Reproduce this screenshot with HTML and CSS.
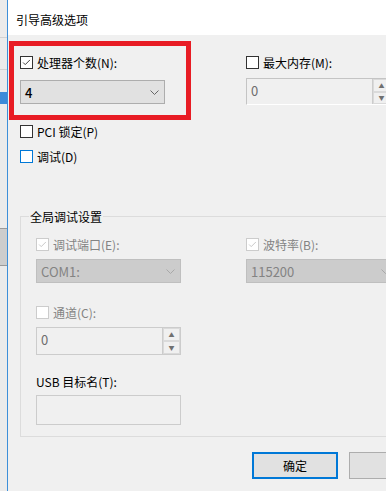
FILE: index.html
```html
<!DOCTYPE html>
<html lang="zh-CN">
<head>
    <meta charset="utf-8">
    <title>引导高级选项</title>
    <link rel="stylesheet" href="styles.css">
</head>
<body>

<div class="screen">
    <div class="side">
        <div class="side-line top-line"></div>
        <div class="side-line"></div>
        <div class="side-tab"></div>
        <div class="side-block"></div>
    </div>

    <div class="dialog">
        <div class="titlebar">引导高级选项</div>

        <div class="content">
            <div class="pair">
                <div class="field">
                    <label class="check">
                        <span class="box">
                            <svg viewBox="0 0 13 13"><path d="M2.5 6.5 L5 9 L10.5 3.5"/></svg>
                        </span>处理器个数(N):
                    </label>
                    <div class="select cpu">
                        <span>4</span>
                        <svg class="chev" viewBox="0 0 9 5"><path d="M0.5 0.5 L4.5 4.5 L8.5 0.5"/></svg>
                    </div>
                </div>
                <div class="field">
                    <label class="check"><span class="box"></span>最大内存(M):</label>
                    <div class="spin mem">
                        <span class="spin-val">0</span>
                        <span class="spin-btns">
                            <span class="spin-btn">▲</span>
                            <span class="spin-btn">▼</span>
                        </span>
                    </div>
                </div>
            </div>

            <label class="check pci"><span class="box"></span>PCI 锁定(P)</label>
            <label class="check debug"><span class="box focus"></span>调试(D)</label>

            <div class="group">
                <div class="group-title">全局调试设置</div>

                <div class="pair inner">
                    <div class="field">
                        <label class="check off">
                            <span class="box">
                                <svg viewBox="0 0 13 13"><path d="M2.5 6.5 L5 9 L10.5 3.5"/></svg>
                            </span>调试端口(E):
                        </label>
                        <div class="select disabled">
                            <span>COM1:</span>
                            <svg class="chev" viewBox="0 0 9 5"><path d="M0.5 0.5 L4.5 4.5 L8.5 0.5"/></svg>
                        </div>
                    </div>
                    <div class="field">
                        <label class="check off">
                            <span class="box">
                                <svg viewBox="0 0 13 13"><path d="M2.5 6.5 L5 9 L10.5 3.5"/></svg>
                            </span>波特率(B):
                        </label>
                        <div class="select disabled baud">
                            <span>115200</span>
                            <svg class="chev" viewBox="0 0 9 5"><path d="M0.5 0.5 L4.5 4.5 L8.5 0.5"/></svg>
                        </div>
                    </div>
                </div>

                <div class="field channel">
                    <label class="check off"><span class="box"></span>通道(C):</label>
                    <div class="spin chan">
                        <span class="spin-val">0</span>
                        <span class="spin-btns">
                            <span class="spin-btn">▲</span>
                            <span class="spin-btn">▼</span>
                        </span>
                    </div>
                </div>

                <div class="field usb">
                    <div class="plain-label">USB 目标名(T):</div>
                    <div class="textbox"></div>
                </div>
            </div>

            <div class="buttons">
                <button class="btn primary">确定</button>
                <button class="btn"></button>
            </div>
        </div>

        <div class="highlight"></div>
    </div>
</div>

</body>
</html>
```

FILE: styles.css
```css
:root {
    --face: #f0f0f0;
    --ctrl: #e1e1e1;
    --ctrl-border: #adadad;
    --muted: #838383;
    --accent: #0078d7;
    --mark: #e81c24;
}

html, body {
    margin: 0;
    padding: 0;
    background: var(--face);
}

body {
    font-family: "Noto Sans CJK SC", "Noto Sans", sans-serif;
    font-size: 12px;
    color: #000;
}

.screen {
    width: 386px;
    height: 491px;
    display: flex;
    overflow: hidden;
}

/* window behind the dialog */
.side {
    width: 7px;
    flex: none;
    background: #ebebeb;
    border-right: 1px solid #3d8fd9;
    display: flex;
    flex-direction: column;
}

.side-line {
    height: 1px;
    background: #d2d2d2;
    margin-top: 31px;
}

.side-line.top-line {
    margin-top: 37px;
}

.side-tab {
    height: 12px;
    margin-top: 22px;
    background: #3c8ad8;
}

.side-block {
    height: 36px;
    margin-top: 124px;
    background: #cdcdcd;
    border-top: 1px solid #9a9a9a;
    border-bottom: 1px solid #9a9a9a;
}

.dialog {
    flex: 1;
    position: relative;
    overflow: hidden;
    background: var(--face);
}

.titlebar {
    height: 35px;
    box-sizing: border-box;
    padding: 12px 0 0 8px;
    line-height: 16px;
    background: #fff;
}

.content {
    padding: 21px 0 0 12px;
}

.pair {
    display: grid;
    grid-template-columns: 226px 144px;
}

.field {
    display: flex;
    flex-direction: column;
}

.check {
    display: flex;
    align-items: center;
    gap: 4px;
    height: 13px;
    line-height: 13px;
    white-space: nowrap;
}

.box {
    width: 13px;
    height: 13px;
    box-sizing: border-box;
    border: 1px solid #333;
    background: #fff;
    flex: none;
    display: block;
}

.box svg {
    display: block;
    width: 11px;
    height: 11px;
    margin: 0;
}

.box svg path {
    fill: none;
    stroke: #333;
    stroke-width: 1.1;
}

.box.focus {
    border-color: var(--accent);
}

.check.off {
    color: var(--muted);
}

.check.off .box {
    border-color: #cccccc;
}

.check.off .box svg path {
    stroke: #c4c4c4;
}

.select {
    margin-top: 11px;
    width: 145px;
    height: 24px;
    box-sizing: border-box;
    border: 1px solid var(--ctrl-border);
    background: var(--ctrl);
    display: flex;
    align-items: center;
    justify-content: space-between;
    padding: 0 5px 0 4px;
    font-size: 13px;
}

.select.cpu {
    font-weight: 500;
}

.chev {
    width: 9px;
    height: 5px;
}

.chev path {
    fill: none;
    stroke: #666;
    stroke-width: 1;
}

.select.disabled {
    margin-top: 8px;
    background: #cccccc;
    border-color: #bfbfbf;
    color: #838383;
}

.select.disabled .chev path {
    stroke: #a8a8a8;
}

.select.baud {
    width: 150px;
}

.spin {
    box-sizing: border-box;
    border: 1px solid #cccccc;
    background: var(--face);
    display: flex;
    justify-content: space-between;
    color: #6d6d6d;
    font-size: 13px;
}

.spin-val {
    padding: 4px 0 0 4px;
    line-height: 16px;
}

.spin.mem {
    margin-top: 9px;
    width: 145px;
    height: 27px;
    border-color: #c4c4c4 #c4c4c4 #fff;
}

.spin.chan {
    margin-top: 8px;
    width: 145px;
    height: 28px;
}

.spin-btns {
    width: 17px;
    display: flex;
    flex-direction: column;
    border-left: 1px solid #cccccc;
}

.spin-btn {
    flex: 1;
    display: flex;
    align-items: center;
    justify-content: center;
    font-size: 6px;
    color: #707070;
    border: 1px solid #dadada;
    background: var(--face);
}

.check.pci {
    margin-top: 20px;
}

.check.debug {
    margin-top: 12px;
}

.group {
    margin-top: 53px;
    width: 380px;
    border: 1px solid #dcdcdc;
    padding: 0 0 11px 15px;
}

.group-title {
    display: block;
    width: fit-content;
    margin: -8px 0 0 -7px;
    padding: 0 1px;
    line-height: 16px;
    background: var(--face);
}

.pair.inner {
    margin-top: 13px;
    grid-template-columns: 210px 150px;
}

.field.channel {
    margin-top: 23px;
}

.field.usb {
    margin-top: 20px;
}

.plain-label {
    line-height: 13px;
    white-space: nowrap;
}

.textbox {
    margin-top: 7px;
    width: 145px;
    height: 30px;
    box-sizing: border-box;
    border: 1px solid #cccccc;
    background: var(--face);
}

.buttons {
    display: flex;
    gap: 11px;
    margin-top: 15px;
    padding-left: 232px;
}

.btn {
    width: 86px;
    height: 27px;
    flex: none;
    box-sizing: border-box;
    border: 1px solid var(--ctrl-border);
    background: var(--ctrl);
    font-family: inherit;
    font-size: 12px;
    color: #000;
    padding: 0;
}

.btn.primary {
    border: 2px solid var(--accent);
}

/* red annotation frame over the first field */
.highlight {
    position: absolute;
    left: 1px;
    top: 41px;
    width: 182px;
    height: 79px;
    box-sizing: border-box;
    border: 5px solid var(--mark);
}
```
